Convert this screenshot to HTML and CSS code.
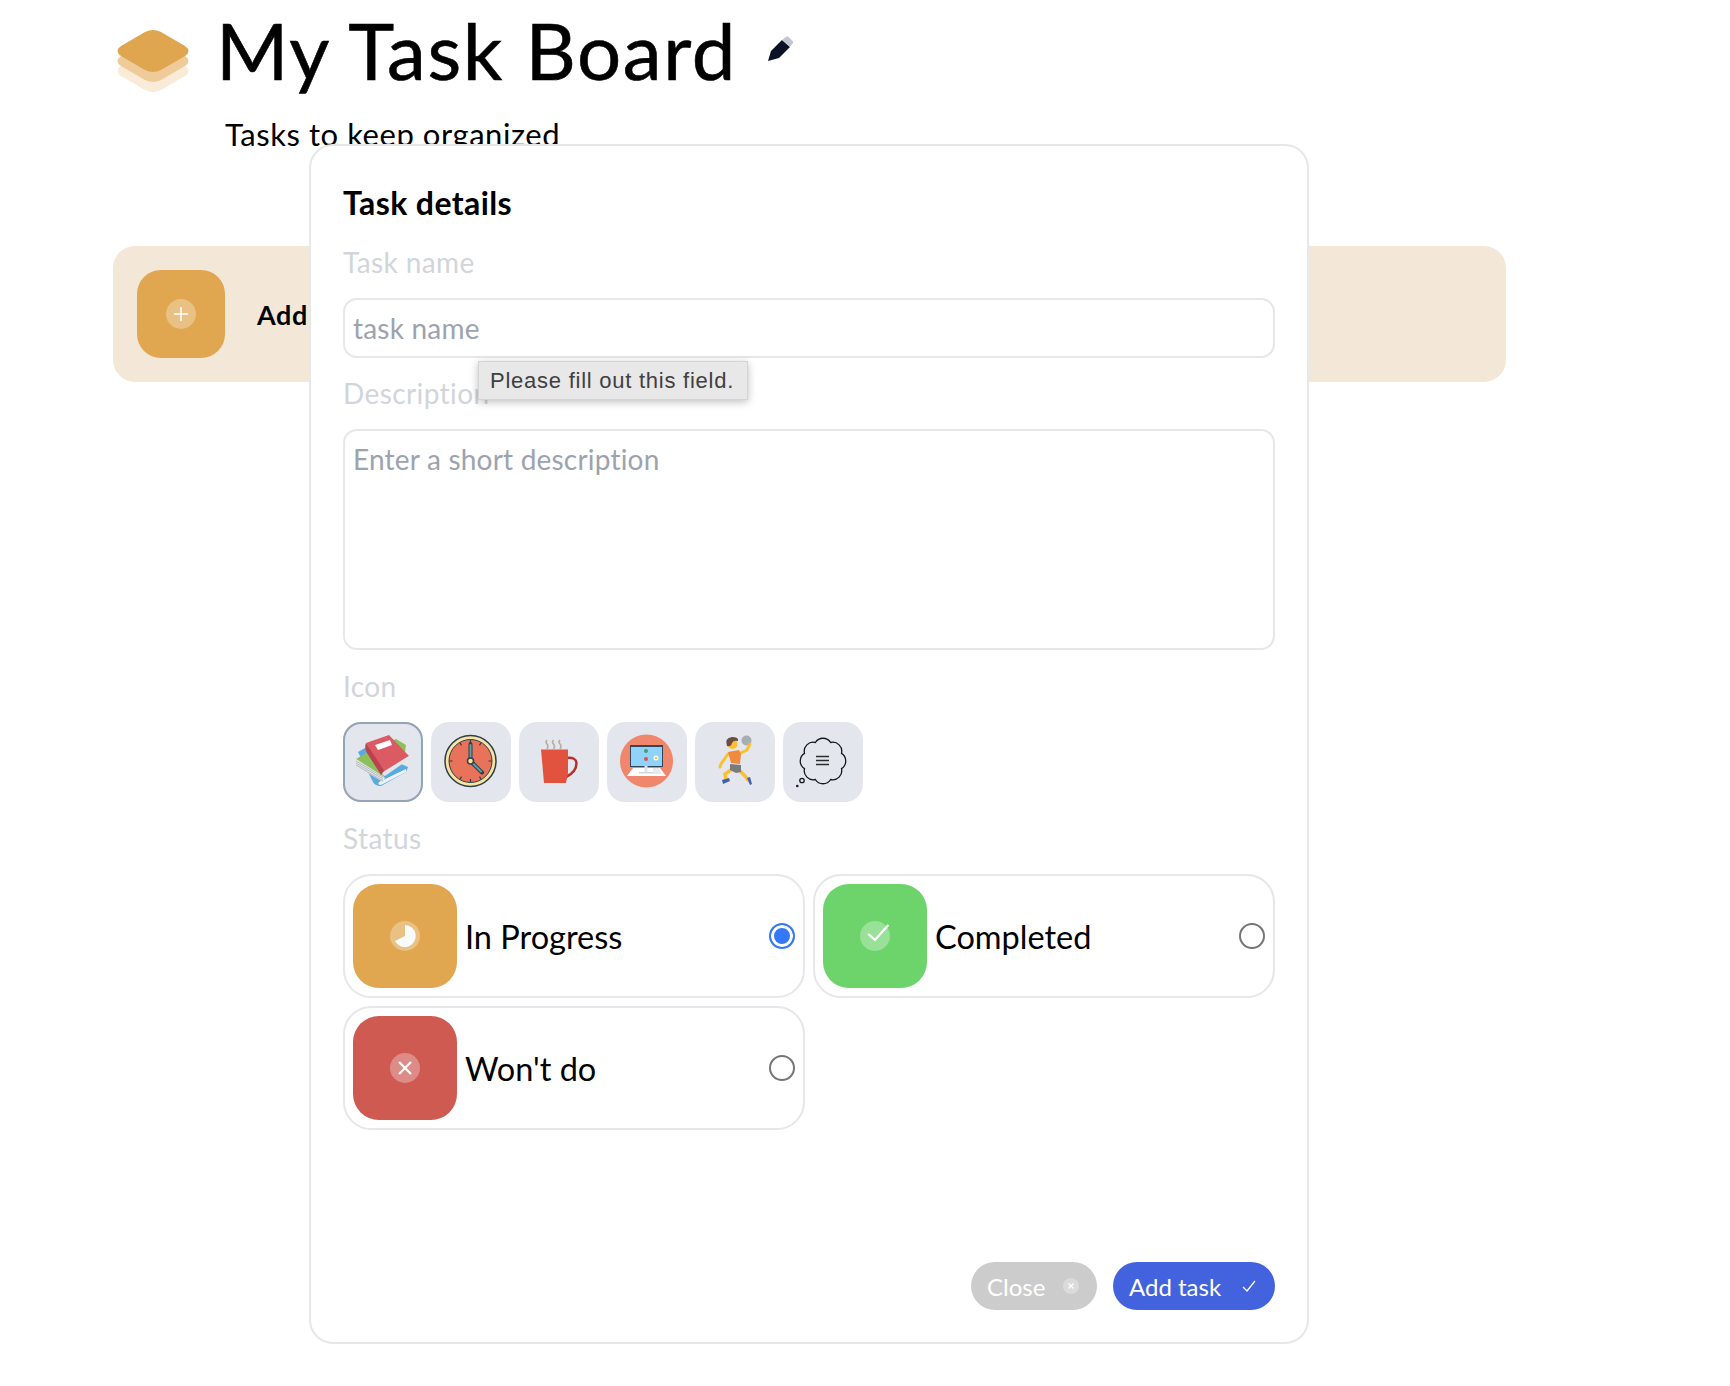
FILE: index.html
```html
<!DOCTYPE html>
<html lang="en">
<head>
    <meta charset="UTF-8">
    <title>My Task Board</title>
    <link rel="stylesheet" href="styles.css">
</head>
<body>

<div class="page">
    <div class="board-head">
        <svg class="logo" viewBox="0 0 72 66">
            <path transform="translate(0 20)" d="M28 4Q36 0 44 4L68 18Q75 23 68 28L44 42Q36 46 28 42L4 28Q-3 23 4 18Z" fill="#f9ebd8"/>
            <path transform="translate(0 10)" d="M28 4Q36 0 44 4L68 18Q75 23 68 28L44 42Q36 46 28 42L4 28Q-3 23 4 18Z" fill="#eecb98"/>
            <path d="M28 4Q36 0 44 4L68 18Q75 23 68 28L44 42Q36 46 28 42L4 28Q-3 23 4 18Z" fill="#e0a64f"/>
        </svg>
        <h1 class="board-title">My Task Board</h1>
        <svg class="pen" viewBox="0 0 26 26">
            <path d="M0 25L3 15L14 4L22 11L11 22Z" fill="#0b1226"/>
            <path d="M14 4L18.500 .500Q19.500 0 20.500 1L24.500 5Q25.500 6 25 7L22 11Z" fill="#c3c6cf"/>
        </svg>
    </div>
    <p class="board-sub">Tasks to keep organized</p>

    <div class="add-bar">
        <span class="add-swatch">
            <span class="dot dot-plus">
                <svg viewBox="0 0 16 16"><path d="M8 1V15M1 8H15" stroke="#fff" stroke-width="1.500" fill="none"/></svg>
            </span>
        </span>
        <span class="add-text">Add new task</span>
    </div>
</div>

<form class="modal">
    <h2 class="modal-title">Task details</h2>

    <label class="field-label" for="name">Task name</label>
    <input class="field-input" id="name" type="text" placeholder="task name">
    <div class="tooltip">Please fill out this field.</div>

    <label class="field-label" for="desc">Description</label>
    <textarea class="field-input field-area" id="desc" placeholder="Enter a short description"></textarea>

    <div class="field-label">Icon</div>
    <div class="icon-row">
        <button type="button" class="icon-btn active">
            <svg viewBox="0 0 80 80">
                <path d="M15 30L22 26L65 45L63 50L38 64Q32 64 30 60Z" fill="#5aaadf"/>
                <path d="M36 60L63 47L63 50L38 63Q34 63 36 60Z" fill="#eef2f5"/>
                <path d="M13 37L30 27L53 17L63 23L62 30L40 55Z" fill="#8ebf5c"/>
                <path d="M13 37L40 54L42 56L40 60L13 44Z" fill="#e4e5e6"/>
                <path d="M13 39L40 55M13 41L40 57M13 43L40 59" fill="none" stroke="#a3a7ab" stroke-width=".7"/>
                <path d="M23 21L46 13L66 34L40 50Z" fill="#dc5a63"/>
                <path d="M23 21Q21 26 24 31L38 53L42 50Z" fill="#b8434c"/>
                <path d="M40 50L66 34L65 38L42 54Q38 53 40 50Z" fill="#e4e5e6"/>
                <path d="M32 23L47 18L49 23L35 28Z" fill="#fff"/>
            </svg>
        </button>
        <button type="button" class="icon-btn">
            <svg viewBox="0 0 80 80">
                <circle cx="39.500" cy="39" r="25.500" fill="#f6e3a6" stroke="#2f3f45" stroke-width="1.500"/>
                <circle cx="39.500" cy="39" r="21.500" fill="#e8735a" stroke="#2f3f45" stroke-width="1"/>
                <path d="M39.500 18V21M39.500 57V60M18.500 39H21.500M57.500 39H60.500M29 20.800L30.500 23.400M50 20.800L48.500 23.400M29 57.200L30.500 54.600M50 57.200L48.500 54.600" stroke="#2f3f45" stroke-width="1.200"/>
                <path d="M39.500 39V22" stroke="#2f3f45" stroke-width="4" stroke-linecap="round"/>
                <path d="M39.500 39L51 50.500" stroke="#2f3f45" stroke-width="4" stroke-linecap="round"/>
                <path d="M39.500 39V23" stroke="#5aa0ad" stroke-width="2" stroke-linecap="round"/>
                <path d="M39.500 39L50 49.500" stroke="#5aa0ad" stroke-width="2" stroke-linecap="round"/>
                <circle cx="39.500" cy="39" r="3" fill="#f6e3a6" stroke="#2f3f45" stroke-width="1.500"/>
            </svg>
        </button>
        <button type="button" class="icon-btn">
            <svg viewBox="0 0 80 80">
                <path d="M28 18Q26 20 28 22T28 27M34.500 18Q32.500 20 34.500 22T34.500 27M41 18Q39 20 41 22T41 27" fill="none" stroke="#b9aaa5" stroke-width="1.500"/>
                <path d="M48 36Q57 35 57.500 41Q57.500 50 47 55" fill="none" stroke="#b8302a" stroke-width="2.500"/>
                <path d="M22 27.500H49V51L47 61H25Z" fill="#e2533f"/>
            </svg>
        </button>
        <button type="button" class="icon-btn">
            <svg viewBox="0 0 80 80">
                <circle cx="39.500" cy="39" r="26.500" fill="#f0876c"/>
                <rect x="23" y="23" width="33" height="22" fill="#33475b"/>
                <rect x="24" y="25" width="31" height="19" fill="#8fd3fb"/>
                <circle cx="39" cy="29" r="2" fill="#4b9a7a"/>
                <circle cx="39" cy="37" r="2" fill="#e0533f"/>
                <circle cx="49" cy="36" r="2.500" fill="#fff"/>
                <circle cx="49" cy="36" r="1.300" fill="#f6c445"/>
                <path d="M26 46H53L59 54H20Z" fill="#fff"/>
                <rect x="37.500" y="44" width="3" height="6" fill="#dfe4ea"/>
                <rect x="32" y="50" width="14" height="1.500" fill="#cfd6de"/>
                <path d="M46 47H52M46 49H53M46 51H54" stroke="#cfd6de" stroke-width="1"/>
            </svg>
        </button>
        <button type="button" class="icon-btn">
            <svg viewBox="0 0 80 80">
                <circle cx="51.500" cy="18.500" r="5" fill="#a6adb3"/>
                <path d="M44 32L52 28L55 22" fill="none" stroke="#fbc02d" stroke-width="3" stroke-linecap="round"/>
                <path d="M33 32L26 42L25 45" fill="none" stroke="#fbc02d" stroke-width="3" stroke-linecap="round"/>
                <path d="M36 48L30 52L31 58M44 48L50 54L53 58" fill="none" stroke="#fbc02d" stroke-width="3.500" stroke-linecap="round"/>
                <circle cx="37.500" cy="22" r="5" fill="#fbc02d"/>
                <path d="M32 24Q29 16 37 15Q44 15 43 19Q38 18 37 21Q36 25 32 24Z" fill="#6d4c41"/>
                <path d="M33 30L44 28L46 32L45 42L36 41Z" fill="#f08a3c"/>
                <path d="M35 42L46 43L46 50L41 51L35 48Z" fill="#7b7b7b"/>
                <path d="M27 58L34 56L35 59L28 62Z" fill="#3f60b5"/>
                <path d="M52 56L55 55L57 62L55 63Z" fill="#3f60b5"/>
            </svg>
        </button>
        <button type="button" class="icon-btn">
            <svg viewBox="0 0 80 80">
                <path d="M47.650 20.500A9 9 0 0 1 58.500 31.350A9 9 0 0 1 58.500 46.650A9 9 0 0 1 47.650 57.500A9 9 0 0 1 32.350 57.500A9 9 0 0 1 21.500 46.650A9 9 0 0 1 21.500 31.350A9 9 0 0 1 32.350 20.500A9 9 0 0 1 47.650 20.500Z" fill="none" stroke="#16191c" stroke-width="1.300"/>
                <circle cx="19" cy="58.500" r="2.200" fill="none" stroke="#16191c" stroke-width="1.300"/>
                <circle cx="14.300" cy="64" r="1.300" fill="#16191c"/>
                <path d="M33 34.500H46M33 38.500H46M33 42.500H46" stroke="#2a2d30" stroke-width="1.400"/>
            </svg>
        </button>
    </div>

    <div class="field-label">Status</div>
    <div class="status-grid">
        <label class="status-card">
            <span class="swatch swatch-progress">
                <span class="dot dot-progress">
                    <svg viewBox="0 0 30 30"><path d="M15 4A11 11 0 1 1 5 20L15 15Z" fill="#f8fafc"/></svg>
                </span>
            </span>
            <span class="status-name">In Progress</span>
            <input class="status-radio" type="radio" name="status" checked>
        </label>
        <label class="status-card">
            <span class="swatch swatch-done">
                <span class="dot dot-done">
                    <svg viewBox="0 0 30 30"><path d="M8.300 13L15 19L28.300 4" stroke="#fff" stroke-width="2.200" fill="none"/></svg>
                </span>
            </span>
            <span class="status-name">Completed</span>
            <input class="status-radio" type="radio" name="status">
        </label>
        <label class="status-card">
            <span class="swatch swatch-wont">
                <span class="dot dot-wont">
                    <svg viewBox="0 0 30 30"><path d="M9 9L21 21M21 9L9 21" stroke="#fff" stroke-width="2.200" fill="none"/></svg>
                </span>
            </span>
            <span class="status-name">Won't do</span>
            <input class="status-radio" type="radio" name="status">
        </label>
    </div>

    <div class="modal-foot">
        <button type="button" class="pill pill-close">Close
            <span class="pill-x">
                <svg viewBox="0 0 16 16"><path d="M5.500 5.500L10.500 10.500M10.500 5.500L5.500 10.500" stroke="#fff" stroke-width="1.300" fill="none"/></svg>
            </span>
        </button>
        <button type="button" class="pill pill-add">Add task
            <svg class="pill-check" viewBox="0 0 16 16"><path d="M2 9L6 13L14 3" stroke="#fff" stroke-width="1.300" fill="none"/></svg>
        </button>
    </div>
</form>

</body>
</html>
```

FILE: styles.css
```css
/* reset */
*{margin: 0;padding: 0;box-sizing: border-box;}
body{background: #fff;color: #000;font-family: "Lato", "Noto Sans", sans-serif;}

/* board behind the dialog */
.page{padding-left: 113px;width: 1506px;}
.board-head{display: flex;align-items: flex-start;height: 116px;padding-left: 4px;}
.logo{width: 72px;height: 66px;margin-top: 28px;flex: none;}
.board-title{font-size: 78px;font-weight: 400;line-height: 100px;margin-left: 27px;letter-spacing: 1.6px;-webkit-text-stroke: .6px #000;}
.pen{width: 26px;height: 26px;margin: 36px 0 0 31px;flex: none;}
.board-sub{font-size: 31px;line-height: 36px;margin-left: 112px;letter-spacing: .55px;}
.add-bar{display: flex;align-items: center;height: 136px;margin-top: 94px;padding-left: 24px;background: #f3e7d8;border-radius: 22px;}
.add-swatch{display: flex;align-items: center;justify-content: center;width: 88px;height: 88px;background: #e0a650;border-radius: 24px;}
.add-text{font-size: 27px;font-weight: 700;margin-left: 32px;letter-spacing: .6px;}

/* shared round badge */
.dot{display: flex;align-items: center;justify-content: center;width: 30px;height: 30px;border-radius: 50%;background: rgba(255,255,255,.3);}
.dot svg{display: block;width: 30px;height: 30px;overflow: visible;}
.dot-plus svg{width: 16px;height: 16px;}

/* dialog */
.modal{position: absolute;left: 309px;top: 144px;display: flex;flex-direction: column;width: 1000px;height: 1200px;padding: 39px 32px 32px;background: #fff;border: 2px solid #e5e7eb;border-radius: 24px;}
.modal-title{font-size: 32px;font-weight: 700;line-height: 36px;letter-spacing: .4px;}
.field-label{display: block;font-size: 28px;line-height: 36px;letter-spacing: .4px;color: #d1d5db;margin-top: 23px;margin-bottom: 18px;}
.field-input{display: block;width: 100%;height: 60px;padding: 0 8px;font-family: inherit;font-size: 28px;letter-spacing: .2px;color: #111;background: #fff;border: 2px solid #e5e7eb;border-radius: 14px;outline: none;}
.field-input::placeholder{color: #9ca3af;opacity: 1;}
.field-input ~ .field-label{margin-top: 18px;}
.tooltip + .field-label{margin-top: 17px;}
.field-area{height: 221px;padding-top: 12px;resize: none;line-height: 32px;}
.tooltip{position: absolute;left: 167px;top: 215px;width: 270px;height: 39px;padding-left: 11px;font-family: "Liberation Sans", sans-serif;font-size: 22px;line-height: 37px;letter-spacing: .75px;color: #404040;background: #e8e8e8;border: 1px solid #d4d4d4;box-shadow: 0 2px 8px rgba(0,0,0,.25);}

/* icon picker */
.icon-row{display: flex;gap: 8px;}
.icon-btn{width: 80px;height: 80px;background: #e3e6ed;border: 0;border-radius: 18px;}
.icon-btn svg{display: block;width: 80px;height: 80px;}
.icon-btn.active{box-shadow: inset 0 0 0 2px #94a3b8;}

/* status cards */
.status-grid{display: grid;grid-template-columns: 1fr 1fr;gap: 8px;}
.status-card{display: flex;align-items: center;height: 124px;padding: 8px;border: 2px solid #e5e7eb;border-radius: 28px;}
.swatch{display: flex;align-items: center;justify-content: center;width: 104px;height: 104px;flex: none;border-radius: 26px;}
.swatch-progress{background: #e0a650;}
.swatch-done{background: #6dd46c;}
.swatch-wont{background: #cf5a52;}
.status-name{flex: 1;font-size: 32.5px;margin-left: 8px;}
.status-radio{appearance: none;width: 26px;height: 26px;flex: none;background: #fff;border: 2px solid #767676;border-radius: 50%;}
.status-radio:checked{border-color: #3478f6;background: #3478f6;box-shadow: inset 0 0 0 3px #fff;}

/* footer buttons */
.modal-foot{display: flex;justify-content: flex-end;gap: 16px;margin-top: auto;}
.pill{display: flex;align-items: center;justify-content: space-between;height: 48px;padding: 0 18px 0 16px;font-family: inherit;font-size: 24px;color: #fff;border: 0;border-radius: 24px;}
.pill-close{width: 126px;background: #ccc;}
.pill-add{width: 162px;background: #4263dd;}
.pill-x{display: flex;width: 16px;height: 16px;border-radius: 50%;background: rgba(255,255,255,.3);}
.pill-check{width: 16px;height: 16px;}
```
